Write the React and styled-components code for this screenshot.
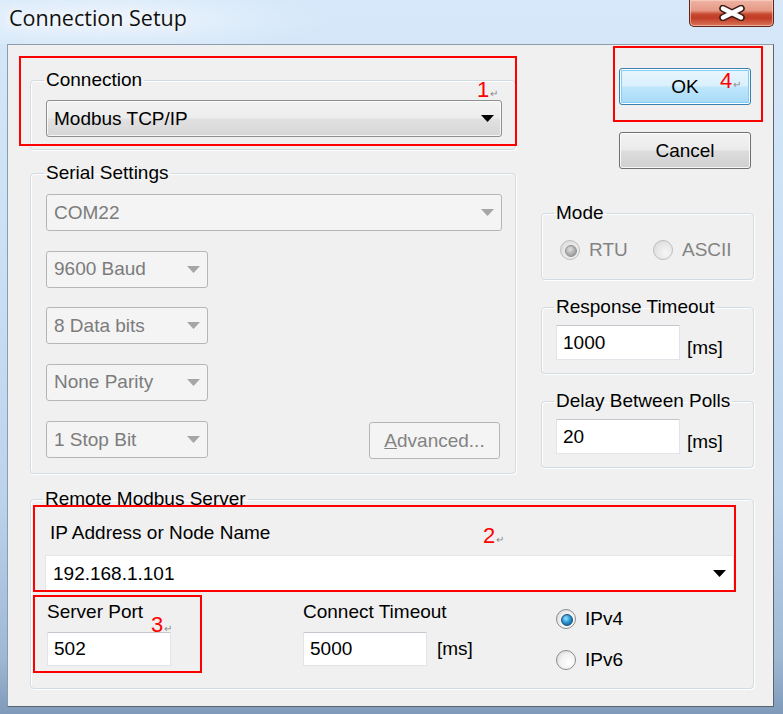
import React from "react";
import styled, { createGlobalStyle } from "styled-components";

const GlobalStyle = createGlobalStyle`
  html, body { margin: 0; padding: 0; }
  body { width: 783px; height: 714px; overflow: hidden; background: #fff; }
  * { box-sizing: border-box; }
`;

const Window = styled.div`
  position: relative;
  width: 783px;
  height: 714px;
  display: flex;
  flex-direction: column;
  padding: 0 9px 7px 7px;
  background: linear-gradient(180deg, #d6e8f9 0%, #cbe0f5 35%, #bcd3ec 70%, #9fb8d4 92%, #7f9aba 100%);
  font-family: "Liberation Sans", Arial, sans-serif;
  font-size: 19px;
  color: #000;
`;

const TitleBar = styled.div`
  height: 44px;
  display: flex;
  justify-content: space-between;
  align-items: flex-start;
  background: radial-gradient(ellipse 230px 34px at 100px 20px, rgba(255, 255, 255, 0.55), rgba(255, 255, 255, 0));
  margin: 0 -9px 0 -7px;
  padding: 0 9px 0 7px;
`;

const Title = styled.div`
  margin: 3px 0 0 2px;
  font-family: "Open Sans", "Noto Sans", sans-serif;
  font-size: 21.5px;
  line-height: 30px;
  color: #111;
  text-shadow: 0 0 10px #fff, 0 0 14px #fff;
`;

const CloseButton = styled.div`
  width: 85px;
  height: 27px;
  border: 1px solid #5e2419;
  border-top: none;
  border-radius: 0 0 5px 5px;
  background: linear-gradient(180deg, #efb4a4 0%, #e59a86 40%, #c8482f 55%, #c23c25 70%, #d9765b 100%);
  box-shadow: inset 0 0 0 1px rgba(255, 220, 210, 0.55);
  display: flex;
  align-items: center;
  justify-content: center;
`;

const Client = styled.div`
  flex: 1;
  display: flex;
  flex-direction: column;
  padding: 23px 19px 0 22px;
  background: #f0f0f0;
  border: 1px solid;
  border-color: #8d9bad #5d646d #5d646d #8d9bad;
`;

const TopSection = styled.div`
  display: flex;
  gap: 25px;
`;

const LeftColumn = styled.div`
  width: 486px;
  margin-top: 2px;
  display: flex;
  flex-direction: column;
`;

const RightColumn = styled.div`
  width: 213px;
  display: flex;
  flex-direction: column;
`;

const GroupBox = styled.fieldset`
  margin: ${(p) => p.$mt || 0}px 0 0;
  padding: ${(p) => p.$pad};
  border: 1px solid #d0dbe2;
  border-radius: 4px;
  box-shadow: inset 1px 1px 0 #fff, 1px 1px 0 #fff;
  min-width: 0;
  display: flex;
  flex-direction: column;
  gap: ${(p) => p.$gap || 0}px;
`;

const Legend = styled.legend`
  padding: 0 2px;
  margin-left: -2px;
  line-height: 20px;
`;

const comboLooks = {
  button: `
    border: 1px solid #8e8f8f;
    border-radius: 3px;
    background: linear-gradient(180deg, #f3f3f3 0%, #ececec 48%, #e1e1e1 52%, #d6d6d6 100%);
    box-shadow: inset 0 0 0 1px rgba(255,255,255,0.75);
    color: #000;
  `,
  disabled: `
    border: 1px solid #b4b7ba;
    border-radius: 3px;
    background: #f4f4f4;
    color: #7c7c7c;
  `,
  edit: `
    border: 1px solid #e3e7ec;
    background: #fff;
    color: #000;
  `,
};

const ComboBox = styled.div`
  height: 37px;
  width: ${(p) => (p.$w ? `${p.$w}px` : "auto")};
  display: flex;
  align-items: center;
  justify-content: space-between;
  padding: 0 7px;
  ${(p) => comboLooks[p.$look || "button"]}
`;

const Arrow = ({ color }) => (
  <svg width="13" height="7" viewBox="0 0 13 7">
    <path d="M0 0 H13 L6.5 7 Z" fill={color} />
  </svg>
);

const Combo = ({ look, w, children }) => (
  <ComboBox $look={look} $w={w}>
    <span>{children}</span>
    <Arrow color={look === "disabled" ? "#a6a6a6" : "#000"} />
  </ComboBox>
);

const ButtonRow = styled.div`
  display: flex;
  align-items: center;
  justify-content: space-between;
`;

const PushButton = styled.div`
  width: ${(p) => p.$w}px;
  height: 37px;
  margin: ${(p) => p.$m || 0};
  display: flex;
  align-items: center;
  justify-content: center;
  border-radius: 3px;
  ${(p) =>
    p.$look === "default"
      ? `
    border: 1px solid #3c7fb1;
    background: linear-gradient(180deg, #eaf6fd 0%, #d9f0fc 48%, #bee6fd 52%, #a7d9f5 100%);
    box-shadow: inset 0 0 0 1px #fff, inset 0 0 0 2px #7fd0f8;
    color: #000;
  `
      : p.$look === "disabled"
      ? `
    border: 1px solid #b4b7ba;
    background: #f4f4f4;
    color: #838383;
  `
      : `
    border: 1px solid #707070;
    background: linear-gradient(180deg, #f2f2f2 0%, #ebebeb 48%, #dddddd 52%, #cfcfcf 100%);
    box-shadow: inset 0 0 0 1px rgba(255,255,255,0.8);
    color: #000;
  `}
`;

const Mnemonic = styled.span`
  text-decoration: underline;
`;

const RadioRow = styled.div`
  display: flex;
  align-items: center;
  margin-left: ${(p) => p.$ml || 0}px;
`;

const RadioItem = styled.div`
  display: flex;
  align-items: center;
  gap: 9px;
  width: ${(p) => (p.$w ? `${p.$w}px` : "auto")};
  height: 20px;
  color: ${(p) => (p.$disabled ? "#838383" : "#000")};
`;

const RadioCircle = styled.span`
  position: relative;
  width: 20px;
  height: 20px;
  flex: none;
  border-radius: 50%;
  border: 1px solid ${(p) => (p.$disabled ? "#bdbdbd" : "#8a8b8c")};
  background: ${(p) =>
    p.$disabled
      ? "radial-gradient(circle at 65% 65%, #f6f6f6 0%, #e6e6e6 55%, #d4d4d4 100%)"
      : "radial-gradient(circle at 65% 65%, #ffffff 0%, #f2f2f2 50%, #cfcfcf 100%)"};

  &::after {
    content: "";
    display: ${(p) => (p.$checked ? "block" : "none")};
    position: absolute;
    left: 4px;
    top: 4px;
    width: 10px;
    height: 10px;
    border-radius: 50%;
    border: 1px solid ${(p) => (p.$disabled ? "#8f8f8f" : "#1b4d78")};
    background: ${(p) =>
      p.$disabled
        ? "radial-gradient(circle at 40% 35%, #e0e0e0 0%, #b0b0b0 50%, #8c8c8c 100%)"
        : "radial-gradient(circle at 40% 35%, #9ae6ff 0%, #2c97d6 45%, #0d4a80 100%)"};
  }
`;

const Radio = ({ checked, disabled, w, children }) => (
  <RadioItem $disabled={disabled} $w={w}>
    <RadioCircle $checked={checked} $disabled={disabled} />
    <span>{children}</span>
  </RadioItem>
);

const FieldRow = styled.div`
  display: flex;
  align-items: center;
  gap: ${(p) => p.$gap}px;
`;

const TextBox = styled.input`
  width: 124px;
  height: ${(p) => p.$h || 35}px;
  padding: 0 6px;
  margin: 0;
  border: 1px solid #e2e4ea;
  border-top-color: #c3c6cc;
  border-radius: 1px;
  background: #fff;
  font: inherit;
  color: #000;
  outline: none;
`;

const Unit = styled.span`
  margin-top: ${(p) => p.$shift || 0}px;
`;

const RemoteLabel = styled.div`
  line-height: 20px;
  margin: 0 0 12px 5px;
`;

const BottomRow = styled.div`
  display: flex;
  margin-top: 9.5px;
`;

const PortColumn = styled.div`
  width: ${(p) => p.$w}px;
  margin-left: ${(p) => p.$ml || 0}px;
  display: flex;
  flex-direction: column;
  gap: 10.5px;
`;

const FieldLabel = styled.div`
  line-height: 20px;
`;

const IpColumn = styled.div`
  display: flex;
  flex-direction: column;
  gap: 21px;
  margin-top: 7.5px;
`;

const MarkBox = styled.div`
  position: absolute;
  left: ${(p) => p.$x}px;
  top: ${(p) => p.$y}px;
  width: ${(p) => p.$w}px;
  height: ${(p) => p.$h}px;
  border: 2px solid #ff0000;
  pointer-events: none;
`;

const MarkTag = styled.div`
  position: absolute;
  left: ${(p) => p.$x}px;
  top: ${(p) => p.$y}px;
  font-family: "Liberation Sans", Arial, sans-serif;
  font-size: 22px;
  line-height: 22px;
  color: #ff0000;
  white-space: nowrap;
`;

const ReturnMark = styled.span`
  font-size: 10px;
  color: #8a8a8a;
  margin-left: 1px;
`;

const Annotation = ({ box, tag, n }) => (
  <>
    <MarkBox $x={box[0]} $y={box[1]} $w={box[2]} $h={box[3]} />
    <MarkTag $x={tag[0]} $y={tag[1]}>
      {n}
      <ReturnMark>↵</ReturnMark>
    </MarkTag>
  </>
);

const CloseGlyph = () => (
  <svg width="28" height="16" viewBox="0 0 28 16">
    <path d="M5 3.5 L23 12.5 M23 3.5 L5 12.5" stroke="#3a1a14" strokeWidth="7.5" strokeLinecap="round" />
    <path d="M5 3.5 L23 12.5 M23 3.5 L5 12.5" stroke="#ffffff" strokeWidth="4.5" strokeLinecap="round" />
  </svg>
);

const App = () => {
  return (
    <>
      <GlobalStyle />
      <Window>
        <TitleBar>
          <Title>Connection Setup</Title>
          <CloseButton>
            <CloseGlyph />
          </CloseButton>
        </TitleBar>
        <Client>
          <TopSection>
            <LeftColumn>
              <GroupBox $pad="10px 13px 12px 15px">
                <Legend>Connection</Legend>
                <Combo look="button">Modbus TCP/IP</Combo>
              </GroupBox>
              <GroupBox $mt={13} $pad="11px 13px 14px 15px" $gap={19.5}>
                <Legend>Serial Settings</Legend>
                <Combo look="disabled">COM22</Combo>
                <Combo look="disabled" w={162}>9600 Baud</Combo>
                <Combo look="disabled" w={162}>8 Data bits</Combo>
                <Combo look="disabled" w={162}>None Parity</Combo>
                <ButtonRow>
                  <Combo look="disabled" w={162}>1 Stop Bit</Combo>
                  <PushButton $look="disabled" $w={131} $m="2px 2px 0 0">
                    <span>
                      <Mnemonic>A</Mnemonic>dvanced...
                    </span>
                  </PushButton>
                </ButtonRow>
              </GroupBox>
            </LeftColumn>
            <RightColumn>
              <PushButton $look="default" $w={132} $m="0 0 0 78px">
                OK
              </PushButton>
              <PushButton $w={132} $m="27px 0 0 78px">
                Cancel
              </PushButton>
              <GroupBox $mt={34} $pad="17px 10px 19px 14px">
                <Legend>Mode</Legend>
                <RadioRow $ml={4}>
                  <Radio checked disabled w={93}>
                    RTU
                  </Radio>
                  <Radio disabled>ASCII</Radio>
                </RadioRow>
              </GroupBox>
              <GroupBox $mt={17} $pad="8px 10px 13px 14px">
                <Legend>Response Timeout</Legend>
                <FieldRow $gap={7}>
                  <TextBox readOnly defaultValue="1000" />
                  <Unit $shift={10}>[ms]</Unit>
                </FieldRow>
              </GroupBox>
              <GroupBox $mt={17} $pad="8px 10px 13px 14px">
                <Legend>Delay Between Polls</Legend>
                <FieldRow $gap={7}>
                  <TextBox readOnly defaultValue="20" />
                  <Unit $shift={10}>[ms]</Unit>
                </FieldRow>
              </GroupBox>
            </RightColumn>
          </TopSection>
          <GroupBox $mt={15} $pad="14px 19px 18px 14px">
            <Legend>Remote Modbus Server</Legend>
            <RemoteLabel>IP Address or Node Name</RemoteLabel>
            <Combo look="edit">192.168.1.101</Combo>
            <BottomRow>
              <PortColumn $w={256} $ml={2}>
                <FieldLabel>Server Port</FieldLabel>
                <TextBox readOnly defaultValue="502" $h={34} />
              </PortColumn>
              <PortColumn $w={253}>
                <FieldLabel>Connect Timeout</FieldLabel>
                <FieldRow $gap={10}>
                  <TextBox readOnly defaultValue="5000" $h={34} />
                  <Unit>[ms]</Unit>
                </FieldRow>
              </PortColumn>
              <IpColumn>
                <Radio checked>IPv4</Radio>
                <Radio>IPv6</Radio>
              </IpColumn>
            </BottomRow>
          </GroupBox>
        </Client>
        <Annotation n="1" box={[19, 56, 498, 90]} tag={[477, 79]} />
        <Annotation n="4" box={[613, 46, 150, 76]} tag={[720, 70]} />
        <Annotation n="2" box={[33, 505, 703, 87]} tag={[483, 525]} />
        <Annotation n="3" box={[33, 595, 169, 78]} tag={[151, 614]} />
      </Window>
    </>
  );
};

export default App;
